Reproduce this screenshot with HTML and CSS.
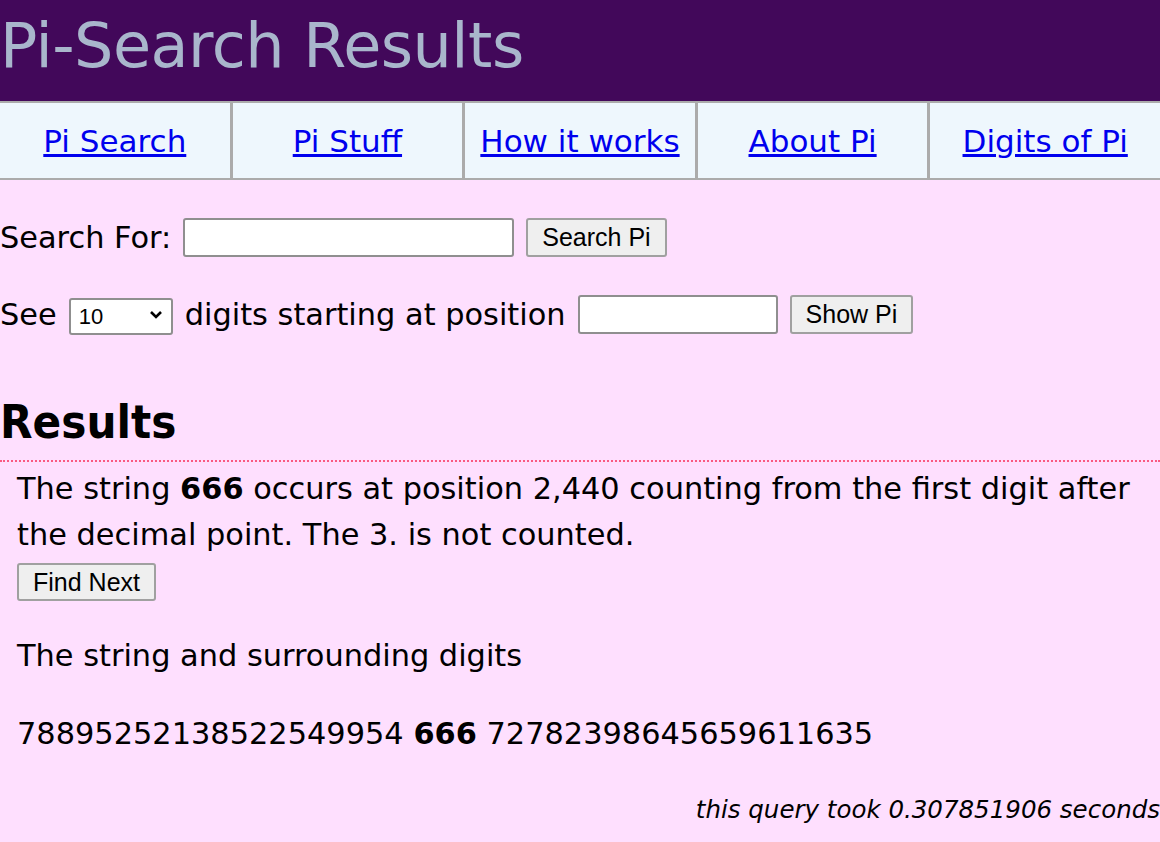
FILE: index.html
```html
<!DOCTYPE html>
<html lang="en">
<head>
    <meta charset="UTF-8">
    <title>Pi-Search Results</title>
    <link rel="stylesheet" href="styles.css">
</head>
<body>
    <div class="header"><h1>Pi-Search Results</h1></div>
    <div class="nav">
        <div class="nav-cell"><a href="#">Pi Search</a></div>
        <div class="nav-cell"><a href="#">Pi Stuff</a></div>
        <div class="nav-cell"><a href="#">How it works</a></div>
        <div class="nav-cell"><a href="#">About Pi</a></div>
        <div class="nav-cell"><a href="#">Digits of Pi</a></div>
    </div>

    <form class="search-form">
        <div class="form-row">
            Search For: <input type="text" class="search-box"> <button type="button" class="btn">Search Pi</button>
        </div>
        <div class="form-row">
            See
            <span class="select-wrap">
                <select class="digit-select"><option>10</option><option>20</option><option>50</option></select>
                <svg class="chevron" width="14" height="10" viewBox="0 0 14 10"><path d="M2 2 L7 7 L12 2" fill="none" stroke="#000" stroke-width="2.6"/></svg>
            </span>
            digits starting at position <input type="text" class="pos-box"> <button type="button" class="btn">Show Pi</button>
        </div>
    </form>

    <h2 class="results-title">Results</h2>
    <div class="results">
        <p class="found">The string <b>666</b> occurs at position 2,440 counting from the first digit after the decimal point. The 3. is not counted.</p>
        <button type="button" class="btn">Find Next</button>
        <p class="surround">The string and surrounding digits</p>
        <p class="digits">78895252138522549954 <b>666</b> 72782398645659611635</p>
    </div>
    <p class="timing">this query took 0.307851906 seconds</p>
</body>
</html>
```
FILE: styles.css
```css
body {
    margin: 0;
    background-color: #fedffe;
    font-family: "DejaVu Sans", sans-serif;
    color: #000;
    font-size: 30.4px;
}
.header {
    background-color: #42085a;
    height: 101px;
}
.header h1 {
    margin: 0;
    font-weight: normal;
    font-size: 62px;
    line-height: 92px;
    color: #a9b6cc;
    letter-spacing: -0.5px;
}
.nav {
    display: flex;
    background-color: #eef7fd;
    border-top: 2px solid #ababab;
    border-bottom: 2px solid #ababab;
}
.nav-cell {
    flex: 1;
    height: 75px;
    display: flex;
    align-items: center;
    justify-content: center;
    border-left: 3px solid #ababab;
}
.nav-cell:first-child {
    border-left: none;
}
.nav-cell a {
    color: #0000ee;
    font-size: 31px;
}
.search-form {
    margin-top: 38px;
}
.form-row {
    display: flex;
    align-items: center;
    gap: 12px;
    margin-bottom: 38px;
    white-space: nowrap;
}
.form-row input {
    height: 39px;
    box-sizing: border-box;
    border: 2px solid #8f8f8f;
    border-radius: 3px;
    background: #fff;
}
.search-box {
    width: 331px;
}
.pos-box {
    width: 200px;
}
.select-wrap {
    position: relative;
    display: inline-block;
    height: 37px;
}
.digit-select {
    appearance: none;
    width: 104px;
    height: 37px;
    padding: 0 0 0 8px;
    font-family: "Liberation Sans", Arial, sans-serif;
    font-size: 22px;
    color: #000;
    border: 2px solid #8f8f8f;
    border-radius: 3px;
    background: #fff;
}
.chevron {
    position: absolute;
    right: 10px;
    top: 14px;
    pointer-events: none;
}
.btn {
    font-family: "Liberation Sans", Arial, sans-serif;
    font-size: 25px;
    height: 39px;
    padding: 0 14px;
    background: #efefef;
    border: 2px solid #a0a0a0;
    border-radius: 3px;
    color: #000;
}
.results-title {
    margin: 58px 0 0;
    font-family: "DejaVu Sans Condensed", "DejaVu Sans", sans-serif;
    font-size: 47px;
    font-weight: bold;
    line-height: 60px;
    padding-bottom: 8px;
    border-bottom: 2px dotted #fa5a82;
}
.results {
    padding-left: 17px;
}
.found {
    margin: 0;
    line-height: 46px;
    padding-top: 4px;
}
.results .btn {
    margin-top: 5px;
    height: 38px;
}
.surround {
    margin: 37px 0 0;
}
.digits {
    margin: 43px 0 0;
}
.timing {
    text-align: right;
    font-style: italic;
    font-size: 24.5px;
    margin: 44px 0 0;
}
```
